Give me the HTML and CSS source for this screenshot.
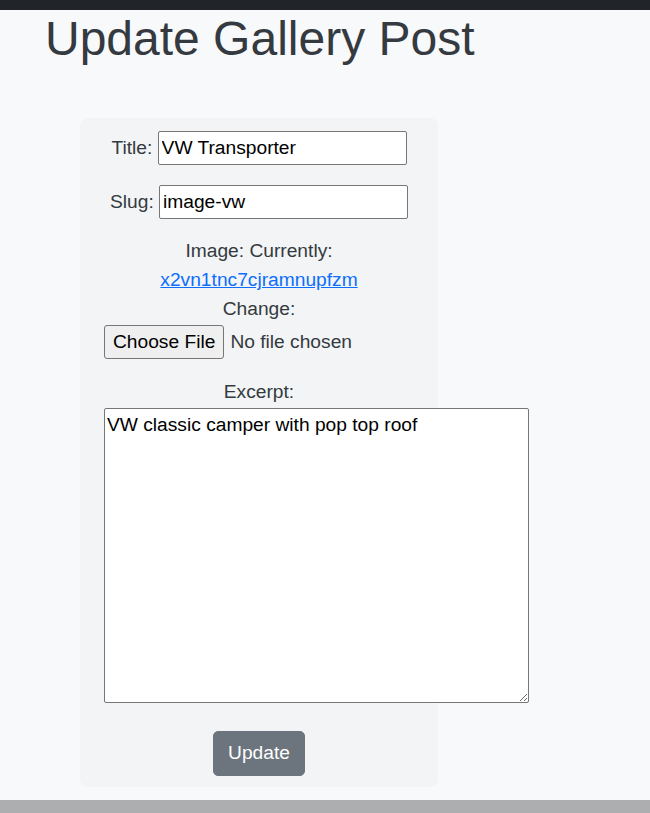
FILE: index.html
```html
<!DOCTYPE html>
<html lang="en">
<head>
<meta charset="utf-8">
<title>Update Gallery Post</title>
<link rel="stylesheet" href="styles.css">
</head>
<body>
<div class="topbar"></div>
<main class="page">
  <h1 class="page-title">Update Gallery Post</h1>
  <form class="card">
    <div class="field-row">
      <label class="label" for="title">Title:</label>
      <input class="text-input" id="title" type="text" value="VW Transporter">
    </div>
    <div class="field-row">
      <label class="label" for="slug">Slug:</label>
      <input class="text-input" id="slug" type="text" value="image-vw">
    </div>
    <div class="image-field">
      <div class="line">Image: Currently:</div>
      <div class="line"><a class="link" href="#">x2vn1tnc7cjramnupfzm</a></div>
      <div class="line">Change:</div>
      <div class="file-row">
        <label class="file-btn">Choose File<input class="file-input" type="file"></label>
        <span class="file-status">No file chosen</span>
      </div>
    </div>
    <div class="excerpt-field">
      <label class="line" for="excerpt">Excerpt:</label>
      <textarea class="textarea" id="excerpt">VW classic camper with pop top roof</textarea>
    </div>
    <div class="actions">
      <button class="btn" type="button">Update</button>
    </div>
  </form>
</main>
<footer class="footer"></footer>
</body>
</html>
```

FILE: styles.css
```css
* {
  box-sizing: border-box;
}

html, body {
  margin: 0;
  padding: 0;
}

body {
  background: #f8f9fa;
  font-family: "Liberation Sans", Arial, sans-serif;
  font-size: 19.2px;
  line-height: 1.5;
  color: #343a40;
}

.topbar {
  height: 10px;
  background: #212529;
}

.page {
  padding-bottom: 13px;
}

.page-title {
  margin: 0;
  padding-left: 45px;
  font-size: 48px;
  line-height: 58px;
  font-weight: 400;
  color: #343a40;
}

.card {
  margin: 50px 0 0 80px;
  width: 358px;
  padding: 13px 24px 11px;
  background: #f2f4f5;
  border-radius: 8px;
  text-align: center;
}

.field-row {
  display: flex;
  justify-content: center;
  align-items: baseline;
  gap: 5.3px;
  margin-bottom: 20px;
}

.field-row + .field-row {
  margin-bottom: 18px;
}

.label {
  color: #343a40;
}

.text-input {
  width: 249px;
  height: 34px;
  padding: 0 3px;
  border: 1px solid #767676;
  border-radius: 2px;
  background: #fff;
  font-family: "Liberation Sans", Arial, sans-serif;
  font-size: 19.2px;
  color: #000;
}

.line {
  display: block;
  height: 29px;
}

.link {
  color: #0d6efd;
  text-decoration: underline;
}

.file-row {
  display: flex;
  align-items: center;
  gap: 6px;
  margin-top: 1px;
  text-align: left;
}

.file-btn {
  display: inline-flex;
  align-items: center;
  height: 34px;
  padding: 0 8px;
  background: #efefef;
  border: 1px solid #767676;
  border-radius: 3px;
  color: #000;
}

.file-input {
  display: none;
}

.file-status {
  color: #343a40;
}

.excerpt-field {
  margin-top: 19px;
  text-align: center;
}

.textarea {
  display: block;
  width: 425px;
  height: 295px;
  margin-top: 1px;
  padding: 2px;
  border: 1px solid #767676;
  border-radius: 2px;
  background: #fff;
  font-family: "Liberation Sans", Arial, sans-serif;
  font-size: 19.2px;
  line-height: 1.5;
  color: #000;
  resize: both;
}

.actions {
  margin-top: 28px;
  display: flex;
  justify-content: center;
}

.btn {
  padding: 7.2px 14.4px;
  border: 1px solid #6c757d;
  border-radius: 5px;
  background: #6c757d;
  color: #fff;
  font-family: "Liberation Sans", Arial, sans-serif;
  font-size: 19.2px;
  line-height: 1.5;
}

.footer {
  height: 40px;
  background: #adaeb0;
}
```
